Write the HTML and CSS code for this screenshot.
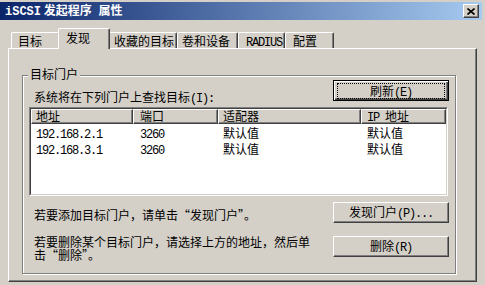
FILE: index.html
```html
<!DOCTYPE html>
<html lang="zh-CN">
<head>
<meta charset="utf-8">
<title>iSCSI 发起程序 属性</title>
<link rel="stylesheet" href="styles.css">
</head>
<body>
<div class="window">
  <div class="titlebar">
    <div class="title"><span class="en">iSCSI</span> 发起程序 <span class="gap">属性</span></div>
    <div class="close"><svg width="8" height="7" viewBox="0 0 8 7"><path d="M0.5 0.5L7.5 6.5M7.5 0.5L0.5 6.5" stroke="#000" stroke-width="1.6" fill="none"/></svg></div>
  </div>
  <div class="tabs">
    <div class="tab t1">目标</div>
    <div class="tab sel">发现</div>
    <div class="tab t3">收藏的目标</div>
    <div class="tab t4">卷和设备</div>
    <div class="tab t5"><span class="en">RADIUS</span></div>
    <div class="tab t6">配置</div>
  </div>
  <div class="panel">
    <div class="group">
      <div class="legend">目标门户</div>
      <div class="toprow">
        <div class="label">系统将在下列门户上查找目标<span class="en">(I):</span></div>
        <button class="btn default"><span class="focus">刷新<span class="en">(E)</span></span></button>
      </div>
      <div class="list">
        <div class="list-inner">
          <div class="row head">
            <div class="cell c1">地址</div>
            <div class="cell c2">端口</div>
            <div class="cell c3">适配器</div>
            <div class="cell c4"><span class="en">IP </span>地址</div>
          </div>
          <div class="row">
            <div class="cell c1"><span class="en">192.168.2.1</span></div>
            <div class="cell c2"><span class="en">3260</span></div>
            <div class="cell c3">默认值</div>
            <div class="cell c4">默认值</div>
          </div>
          <div class="row">
            <div class="cell c1"><span class="en">192.168.3.1</span></div>
            <div class="cell c2"><span class="en">3260</span></div>
            <div class="cell c3">默认值</div>
            <div class="cell c4">默认值</div>
          </div>
        </div>
      </div>
      <div class="actions">
        <div class="note">若要添加目标门户，请单击“发现门户”。</div>
        <button class="btn">发现门户<span class="en">(P)...</span></button>
        <div class="note two">若要删除某个目标门户，请选择上方的地址，然后单<br>击“删除”。</div>
        <button class="btn">删除<span class="en">(R)</span></button>
      </div>
    </div>
  </div>
</div>
</body>
</html>
```

FILE: styles.css
```css
html, body {
  margin: 0;
  padding: 0;
}
body {
  width: 485px;
  height: 285px;
  overflow: hidden;
  background: #d4d0c8;
  font-family: "Noto Sans CJK SC", sans-serif;
  font-size: 12px;
  color: #000;
}
.en {
  font-family: "Liberation Mono", "Noto Sans CJK SC", monospace;
  font-size: 12px;
  letter-spacing: -1.2px;
}
.window {
  padding-top: 2px;
}
.titlebar {
  width: 482px;
  height: 18px;
  background: linear-gradient(to right, #0a246a, #a6caf0);
  display: flex;
  align-items: center;
  justify-content: space-between;
  color: #fff;
  font-weight: bold;
}
.title {
  padding-left: 5px;
  line-height: 18px;
  white-space: pre;
}
.title .en {
  letter-spacing: 0;
}
.title .gap {
  margin-left: 4px;
}
.close {
  width: 16px;
  height: 14px;
  margin-right: 3px;
  box-sizing: border-box;
  background: #d4d0c8;
  border: 1px solid;
  border-color: #fff #404040 #404040 #fff;
  box-shadow: inset -1px -1px 0 #808080;
  display: flex;
  align-items: center;
  justify-content: center;
}
.tabs {
  position: relative;
  z-index: 1;
  display: flex;
  align-items: flex-end;
  height: 20px;
  margin-top: 8px;
  padding-left: 11px;
}
.tab {
  box-sizing: border-box;
  height: 16px;
  padding-left: 6px;
  border-top: 1px solid #fff;
  border-left: 1px solid #fff;
  border-right: 1px solid #404040;
  box-shadow: inset -1px 0 0 #808080;
  border-radius: 2px 2px 0 0;
  background: #d4d0c8;
  line-height: 15px;
  white-space: nowrap;
}
.t1 { width: 49px; }
.t3 { width: 69px; padding-left: 5px; }
.t4 { width: 61px; padding-left: 4px; }
.t5 { width: 47px; padding-left: 7px; }
.t6 { width: 49px; padding-left: 7px; }
.tab.sel {
  position: relative;
  z-index: 2;
  width: 52px;
  height: 21px;
  margin: 0 -2px -1px -2px;
  padding-left: 7px;
  line-height: 17px;
}
.panel {
  box-sizing: border-box;
  width: 469px;
  height: 234px;
  margin-left: 8px;
  padding: 26px 0 0 13px;
  border-top: 1px solid #fff;
  border-left: 1px solid #fff;
  border-right: 1px solid #404040;
  border-bottom: 1px solid #404040;
  box-shadow: inset -1px -1px 0 #808080;
}
.group {
  position: relative;
  box-sizing: border-box;
  width: 434px;
  height: 199px;
  border: 1px solid #808080;
  box-shadow: 1px 1px 0 #fff, inset 1px 1px 0 #fff;
}
.legend {
  position: absolute;
  top: -9px;
  left: 5px;
  padding: 0 2px;
  line-height: 14px;
  background: #d4d0c8;
}
.toprow {
  display: flex;
  justify-content: space-between;
  align-items: flex-start;
  margin-top: 4px;
  margin-right: 6px;
}
.label {
  padding-left: 11px;
  padding-top: 11px;
  line-height: 12px;
}
.btn {
  box-sizing: border-box;
  width: 116px;
  height: 21px;
  margin: 0;
  padding: 0;
  font: inherit;
  color: #000;
  background: #d4d0c8;
  border: 1px solid;
  border-color: #fff #404040 #404040 #fff;
  box-shadow: inset -1px -1px 0 #808080;
  text-align: center;
  line-height: 18px;
  white-space: nowrap;
}
.btn.default {
  border: 1px solid #000;
  padding: 2px 3px;
  box-shadow: inset 1px 1px 0 #fff, inset -1px -1px 0 #404040, inset -2px -2px 0 #808080;
}
.focus {
  display: block;
  box-sizing: border-box;
  height: 16px;
  border: 1px dotted #000;
  line-height: 14px;
}
.list {
  box-sizing: border-box;
  width: 419px;
  height: 89px;
  margin: 2px 0 0 6px;
  border: 1px solid;
  border-color: #808080 #fff #fff #808080;
}
.list-inner {
  box-sizing: border-box;
  height: 100%;
  border: 1px solid;
  border-color: #404040 #d4d0c8 #d4d0c8 #404040;
  background: #fff;
}
.row {
  display: flex;
  height: 16px;
  line-height: 16px;
}
.row.head {
  height: 15px;
}
.cell {
  box-sizing: border-box;
  padding-left: 5px;
  padding-top: 1px;
  white-space: nowrap;
}
.c1 { width: 102px; }
.c2 { width: 85px; padding-left: 7px; }
.c3 { width: 143px; }
.c4 { width: 85px; padding-left: 6px; }
.head .cell {
  height: 15px;
  padding-top: 0;
  line-height: 12px;
  background: #d4d0c8;
  border-top: 1px solid #fff;
  border-left: 1px solid #fff;
  border-right: 1px solid #404040;
  border-bottom: 1px solid #404040;
  box-shadow: inset -1px -1px 0 #808080;
  padding-left: 4px;
}
.head .c2 { padding-left: 6px; }
.head .c4 { padding-left: 5px; }
.actions {
  display: grid;
  grid-template-columns: 1fr 116px;
  align-items: center;
  row-gap: 9px;
  margin-top: 6px;
  margin-right: 6px;
}
.note {
  padding-left: 11px;
  padding-top: 4px;
  line-height: 12px;
  white-space: nowrap;
}
.note.two {
  line-height: 13px;
  padding-top: 3px;
}
```
